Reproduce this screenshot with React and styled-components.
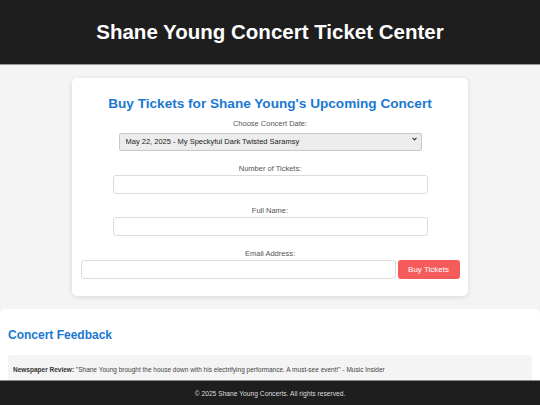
import React from 'react';
import styled, { createGlobalStyle } from 'styled-components';

//Global
const GlobalStyle = createGlobalStyle`
  html, body {
    margin: 0;
    padding: 0;
    background: #f4f4f4;
    font-family: "Liberation Sans", Arial, sans-serif;
  }
`;

//Styled Components
const Page = styled.div`
  height: 405px;
  display: flex;
  flex-direction: column;
  overflow: hidden;
`;

const Header = styled.header`
  flex: 0 0 64px;
  background-color: #1e1e1e;
  border-bottom: 1px solid #9a9a9a;
  color: #fff;
  display: flex;
  align-items: center;
  justify-content: center;

  h1 {
    margin: 0;
    font-size: 20.5px;
    font-weight: bold;
  }
`;

const Main = styled.main`
  flex: 1;
  overflow: hidden;
  padding-top: 13px;
`;

const Card = styled.section`
  width: 380px;
  margin: 0 auto;
  background: #fff;
  border-radius: 5px;
  box-shadow: 0 1px 5px rgba(0, 0, 0, 0.12);
  padding: 18px 8px 17px 8px;

  h2 {
    margin: 0 0 8px;
    text-align: center;
    color: #1a78d2;
    font-size: 13.6px;
    font-weight: bold;
  }
`;

const Group = styled.div`
  display: flex;
  flex-direction: column;
  align-items: center;
  margin-top: ${(p) => p.gap || 0}px;

  label {
    font-size: 7.5px;
    color: #555;
    margin-bottom: 2px;
  }
`;

const SelectWrap = styled.div`
  position: relative;
  width: 303px;

  svg {
    position: absolute;
    right: 5px;
    top: 7px;
    pointer-events: none;
  }
`;

const Select = styled.select`
  appearance: none;
  width: 100%;
  height: 18px;
  font-family: inherit;
  font-size: 7.5px;
  color: #222;
  background: #ececec;
  border: 1px solid #c8c8c8;
  border-radius: 2px;
  padding: 0 6px;
  outline: none;
`;

const Input = styled.input`
  width: 315px;
  height: 19px;
  box-sizing: border-box;
  border: 1px solid #dcdcdc;
  border-radius: 3px;
  background: #fff;
`;

const Row = styled.div`
  display: flex;
  gap: 2px;
`;

const Button = styled.button`
  width: 62px;
  height: 19px;
  border: none;
  border-radius: 3px;
  background: #f65b5b;
  color: #fff;
  font-family: inherit;
  font-size: 8px;
`;

const Feedback = styled.section`
  margin-top: 13px;
  background: #fff;
  border-radius: 5px 5px 0 0;
  padding: 19px 8px 20px;

  h2 {
    margin: 0 0 13px;
    color: #1a78d2;
    font-size: 12px;
    font-weight: bold;
  }
`;

const Review = styled.div`
  background: #f4f4f4;
  border-radius: 3px;
  padding: 11px 5px;
  font-size: 6.5px;
  color: #444;

  strong {
    color: #333;
  }
`;

const Footer = styled.footer`
  flex: 0 0 24px;
  background-color: #1e1e1e;
  border-top: 1px solid #8a8a8a;
  color: #ddd;
  font-size: 6.7px;
  display: flex;
  align-items: center;
  justify-content: center;
`;

// Default Export
export default function App() {
  return (
    <Page>
      <GlobalStyle />
      <Header>
        <h1>Shane Young Concert Ticket Center</h1>
      </Header>
      <Main>
        <Card>
          <h2>Buy Tickets for Shane Young's Upcoming Concert</h2>
          <Group>
            <label>Choose Concert Date:</label>
            <SelectWrap>
              <Select defaultValue="1">
                <option value="1">May 22, 2025 - My Speckyful Dark Twisted Saramsy</option>
              </Select>
              <svg width="5" height="4" viewBox="0 0 5 4">
                <path d="M0.5 0.8 L2.5 2.8 L4.5 0.8" fill="none" stroke="#222" strokeWidth="1.1" />
              </svg>
            </SelectWrap>
          </Group>
          <Group gap={13}>
            <label>Number of Tickets:</label>
            <Input type="number" />
          </Group>
          <Group gap={12.8}>
            <label>Full Name:</label>
            <Input type="text" />
          </Group>
          <Group gap={12.8}>
            <label>Email Address:</label>
            <Row>
              <Input type="email" />
              <Button>Buy Tickets</Button>
            </Row>
          </Group>
        </Card>
        <Feedback>
          <h2>Concert Feedback</h2>
          <Review>
            <strong>Newspaper Review:</strong> "Shane Young brought the house down with his electrifying performance. A must-see event!" - Music Insider
          </Review>
        </Feedback>
      </Main>
      <Footer>© 2025 Shane Young Concerts. All rights reserved.</Footer>
    </Page>
  );
}
